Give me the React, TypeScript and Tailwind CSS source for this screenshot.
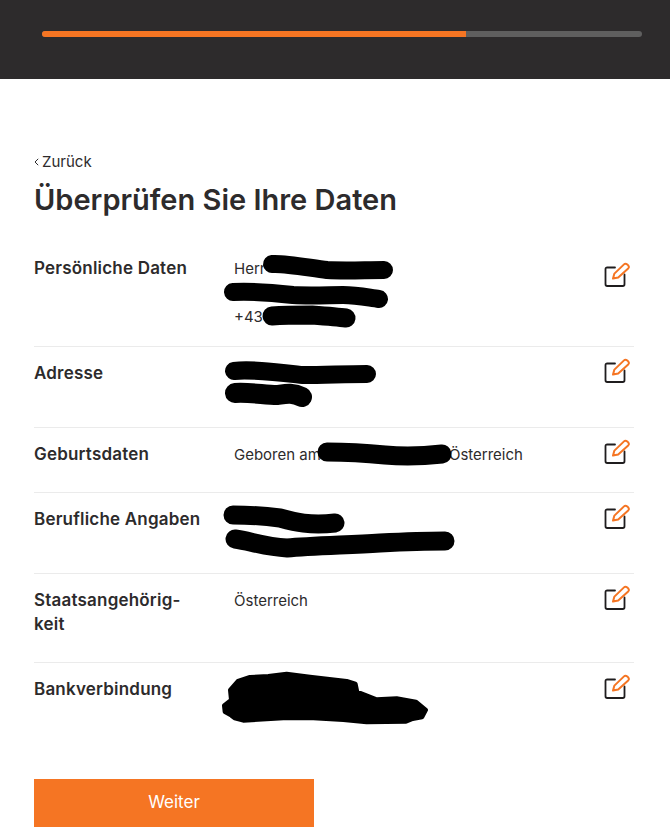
import React from "react";

const font = "font-['Inter','Liberation_Sans',sans-serif]";

function EditIcon({ className = "" }: { className?: string }) {
  return (
    <svg width="28" height="26" viewBox="0 0 28 26" fill="none" className={`mr-[3px] shrink-0 ${className}`}>
      {/* square */}
      <path
        d="M12 5.5H4.2C3.2 5.5 2.5 6.2 2.5 7.2V22.3C2.5 23.3 3.2 24 4.2 24H19.8C20.8 24 21.5 23.3 21.5 22.3V12.5"
        stroke="#1f1d1e"
        strokeWidth="1.8"
        strokeLinecap="round"
      />
      {/* pencil */}
      <path
        d="M10 16.5L11.4 11.6L21 2.4C21.8 1.6 23.2 1.6 24.3 2.5L25.2 3.4C26 4.4 26 5.6 25.2 6.4L15.2 15.6L10 16.5Z"
        stroke="#f57523"
        strokeWidth="2"
        strokeLinejoin="round"
      />
    </svg>
  );
}

function Row({
  label,
  children,
  iconClass = "-mt-[3px]",
  last = false,
}: {
  label: React.ReactNode;
  children: React.ReactNode;
  iconClass?: string;
  last?: boolean;
}) {
  return (
    <div className={`flex pt-3.5 pb-[18px] ${last ? "" : "border-b border-[#ebebeb]"}`}>
      <div className="w-[200px] shrink-0 pb-2 pr-2 text-[17px] font-semibold leading-6 tracking-[0.2px] text-[#2d2b2c]">
        {label}
      </div>
      <div className="-mb-px flex-1 pt-px text-[15px] leading-6 text-[#2d2b2c]">{children}</div>
      <EditIcon className={iconClass} />
    </div>
  );
}

// the black marker strokes that hide personal data in the screenshot
const scribbles: { d: string; w: number }[] = [
  { d: "M272 264 C285 263 310 268 327 270 C345 271 365 270 384 270", w: 18 },
  { d: "M233 292 C250 291 275 293 293 295 C310 296 330 295 343 295 C358 295 370 298 379 299", w: 18 },
  { d: "M272 316 C285 315 300 315 312 315 C325 316 338 317 346 318", w: 19 },
  { d: "M234 371 C250 369 275 372 303 375 C325 375 345 374 367 374", w: 18 },
  { d: "M235 393 C250 392 265 395 277 395 C285 394 292 392 302 397", w: 20 },
  { d: "M327 452 C345 452 365 453 385 455 C405 457 425 456 442 454", w: 19 },
  { d: "M233 515 C250 515 265 516 280 518 C295 522 310 526 335 523", w: 19 },
  { d: "M235 539 C250 541 265 547 287 548 C310 546 345 545 380 543 C400 542 425 541 445 541", w: 19 },
];

const bankBlob =
  "M91 90L114 64L150 52L205 49L260 42L330 51L440 64L466 72L471 96L530 119L590 116L648 126L677 150L666 171L638 176L618 184L500 186L430 179L340 174L250 174L130 181L104 174L94 166L75 155L73 137L94 120Z";

export default function App() {
  return (
    <div className={`relative h-[829px] overflow-hidden bg-white ${font}`}>
      <header className="h-[79px] bg-[#2d2b2c] pl-[42px] pr-[28px] pt-[31px]">
        <div className="h-1.5 w-full overflow-hidden rounded-[3px] bg-[#5f5f5f]">
          <div className="h-full w-[424px] bg-[#f57523]" />
        </div>
      </header>

      <main className="pl-[34px] pr-[36px] pt-[72px]">
        <a className="flex items-center gap-[3px] text-[15px] leading-[22px] text-[#2d2b2c]">
          <svg width="5" height="8" viewBox="0 0 5 8" fill="none">
            <path d="M4.2 .8L1 4L4.2 7.2" stroke="#2d2b2c" strokeWidth="1" />
          </svg>
          Zurück
        </a>
        <h1 className="mt-[6px] text-[29px] font-semibold leading-[42px] text-[#2d2b2c]">Überprüfen Sie Ihre Daten</h1>

        <div className="mt-[21px]">
          <Row label="Persönliche Daten" iconClass="mt-[6px]">
            <div className="h-6">Herr</div>
            <div className="h-6" />
            <div className="h-6">+43</div>
          </Row>
          <Row label="Adresse">
            <div className="h-12" />
          </Row>
          <Row label="Geburtsdaten">
            <div>
              Geboren am<span className="inline-block w-[128px]" />
              Österreich
            </div>
          </Row>
          <Row label="Berufliche Angaben">
            <div className="h-12" />
          </Row>
          <Row
            label={
              <>
                Staatsangehörig-
                <br />
                keit
              </>
            }
          >
            <div>Österreich</div>
          </Row>
          <Row label="Bankverbindung" last>
            <div className="h-12" />
          </Row>
        </div>

        <button className="mt-[36px] h-12 w-[280px] bg-[#f57523] text-[17px] font-normal text-white">Weiter</button>
      </main>

      <svg className="pointer-events-none absolute left-0 top-0" width="670" height="829" fill="none">
        {scribbles.map((s, i) => (
          <path key={i} d={s.d} stroke="#000" strokeWidth={s.w} strokeLinecap="round" strokeLinejoin="round" />
        ))}
        <path
          d={bankBlob}
          transform="translate(200 660) scale(0.3333)"
          fill="#000"
          stroke="#000"
          strokeWidth="14"
          strokeLinejoin="round"
        />
      </svg>
    </div>
  );
}
